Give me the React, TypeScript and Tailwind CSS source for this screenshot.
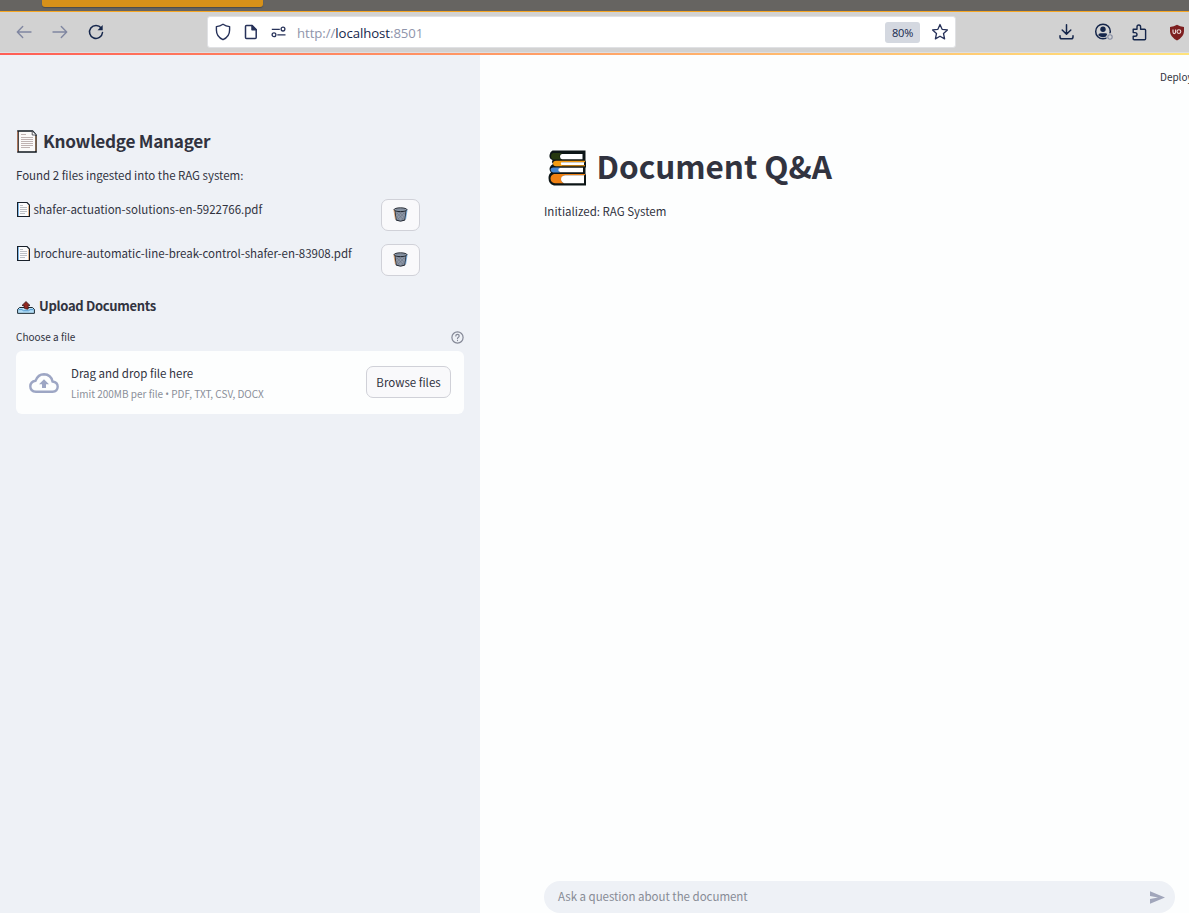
import React from "react";

function DocIcon({ className }: { className: string }) {
  return (
    <svg viewBox="0 0 20 23" className={className}>
      <path d="M1 1H15.5L19 5V22H1Z" fill="#fbfaf9" stroke="#11181f" strokeWidth="1.6" />
      <path d="M.6 1.5V21.5" stroke="#b87a5c" strokeWidth="1" />
      <path d="M18.9 6V21" stroke="#c98d5c" strokeWidth=".8" />
      <path d="M15.2 1.2V5H19" fill="#fff" stroke="#4a4a50" strokeWidth=".9" />
      <path d="M4 4.5H9M4 7.5H16M4 9.5H16M4 11.5H16M4 13.5H16M4 15.5H16M4 17.5H13" stroke="#b8a9a8" strokeWidth=".9" />
    </svg>
  );
}

function SmallDocIcon() {
  return (
    <svg viewBox="0 0 13 15" className="h-[15px] w-[13px] shrink-0">
      <path d="M.5 .5H10L12.5 3V14.5H.5Z" fill="#fcfcfc" stroke="#18202a" strokeWidth="1.2" />
      <path d="M1.5 1V14" stroke="#7db6e6" />
      <path d="M11.5 3.5V14" stroke="#e9bb8d" />
      <path d="M3 3.5H6M3 5.5H10M3 7.5H10M3 9.5H10M3 11.5H8" stroke="#bcbfc4" />
    </svg>
  );
}

function TrashButton() {
  return (
    <div className="flex h-8 w-[39px] items-center justify-center rounded-[7px] border border-[#d0d1d8] bg-[#f9f9fb]">
      <svg viewBox="0 0 15 16" className="mb-px h-[15px] w-[15px]" preserveAspectRatio="none">
        <path d="M1.8 3.5L3.2 14Q7.5 16.2 11.8 14L13.2 3.5Z" fill="#8f98a7" stroke="#1d222b" />
        <path d="M3.5 6L10.8 14M5.8 5L12 11.5M9 5L12.6 8.5M3.5 10L7 14.6M11.5 6L4 14M9 5L3.4 11M6 5L3 8M12 10L8 14.6" stroke="#677182" strokeWidth=".6" />
        <ellipse cx="7.5" cy="2.9" rx="6.5" ry="2" fill="#97a2b1" stroke="#1d222b" />
        <path d="M3 3.1H12" stroke="#687384" strokeWidth=".8" />
        <path d="M.9 3L2.4 13" stroke="#d98842" strokeWidth=".7" />
        <path d="M14.1 3L12.6 13" stroke="#4b94d6" strokeWidth=".7" />
      </svg>
    </div>
  );
}

function BooksIcon() {
  return (
    <svg viewBox="0 0 38 36" className="mt-[5px] h-9 w-[38px] shrink-0">
      <path d="M4.5 .5H37.5V10.5L38 12V17L37.5 18V24L38 25V35.5H6Q.5 34 .5 28Q.5 24 3 22.5Q0 19 3 15.5L5 14Q3 12 4.5 10Q1 9 1.5 5Q2 1.5 4.5 .5Z" fill="#0c1516" />
      <path d="M5 3H15Q11 4 11.5 6.5Q11.5 9 14 9.5H5Q2.7 8.5 3 6Q3.2 3.6 5 3Z" fill="#25380f" />
      <path d="M14 4H34.5V9.2H14Q12 9 12 6.5Q12 4.4 14 4Z" fill="#fff" />
      <path d="M8 10.8H37V12.2H14V15.2H37V16.3H8Q5 16 5 13.5Q5 11 8 10.8Z" fill="#f39c12" />
      <path d="M13.5 12.3H36V15H13.5Q12 13.7 13.5 12.3Z" fill="#fff" />
      <path d="M5 17.5H12Q9.5 20 12 22.5H5Q2.5 22 2.5 19.8Q2.5 18 5 17.5Z" fill="#4687d3" />
      <path d="M12 17.8H35V22.3H12Q8.5 20 12 17.8Z" fill="#fff" />
      <path d="M6 24H37V25.2H17Q13 26 13.2 29.5Q13.2 32 16 33.2H7Q2.5 32.5 2.5 28.5Q2.5 25 6 24Z" fill="#ef8114" />
      <path d="M17 25.3H36V33.2H16Q13 32 13 29Q13 26 17 25.3Z" fill="#fff" />
    </svg>
  );
}

function UploadIcon() {
  return (
    <svg viewBox="0 0 18 14" className="mt-[3px] h-[13px] w-[18px] shrink-0" preserveAspectRatio="none">
      <path d="M2.5 7H15.5L17.4 9V13.3H.6V9Z" fill="#b4def7" stroke="#14212b" />
      <path d="M1.5 9.3H5L6.5 10.5H11.5L13 9.3H16.5" fill="none" stroke="#4b95cc" />
      <path d="M9 .6L13 4.8H11.2V8.7Q8.8 9 7 7.5V4.8H5Z" fill="#922820" stroke="#35191c" strokeWidth=".8" />
    </svg>
  );
}

function BrowserBar() {
  return (
    <div>
      <div className="h-[11px] bg-[#666461] pl-[42px]">
        <div className="h-[7px] w-[221px] rounded-b-[3px] bg-[#d79119] shadow-[0_1px_1px_#4b4b4b]" />
      </div>
      <div className="h-px bg-[#f5a623]" />
      <div className="flex h-[41px] items-center border-b border-[#dedfe2] bg-[#d2d2d2] text-[#15264b]">
        <svg viewBox="0 0 16 14" className="ml-4 h-3.5 w-4" fill="none" stroke="#8087a1" strokeWidth="1.4" strokeLinecap="round" strokeLinejoin="round">
          <path d="M15 7H1.5M6.7 1.5L1.3 7L6.7 12.5" />
        </svg>
        <svg viewBox="0 0 16 14" className="ml-5 h-3.5 w-4" fill="none" stroke="#8087a1" strokeWidth="1.4" strokeLinecap="round" strokeLinejoin="round">
          <path d="M1 7H14.5M9.3 1.5L14.7 7L9.3 12.5" />
        </svg>
        <svg viewBox="0 0 16 16" className="ml-5 h-4 w-4" fill="none" stroke="currentColor" strokeWidth="1.5">
          <path d="M13.2 4A6.5 6.5 0 1 0 14.5 8.5" strokeLinecap="round" />
          <path d="M14.7 1V6.2H9.5Z" fill="currentColor" stroke="none" />
        </svg>
        <div className="ml-[103px] flex h-8 w-[749px] items-center rounded-[3px] border border-[#e0e1e4] bg-white pl-[7px]">
          <svg viewBox="0 0 16 18" className="h-[18px] w-4" fill="none" stroke="#27325a" strokeWidth="1.4" strokeLinejoin="round">
            <path d="M8 1.2Q11 3.3 14.6 3.6V7Q14.6 13.8 8 16.7Q1.4 13.8 1.4 7V3.6Q5 3.3 8 1.2Z" />
          </svg>
          <svg viewBox="0 0 14 16" className="ml-[13px] h-4 w-3.5" fill="none" stroke="#27325a" strokeWidth="1.5" strokeLinejoin="round">
            <path d="M2.5 1.5H8L12.2 5.7V13.5Q12.2 14.5 11.2 14.5H2.5Q1.5 14.5 1.5 13.5V2.5Q1.5 1.5 2.5 1.5Z" />
            <path d="M8 1.5V5.7H12.2Z" fill="#27325a" />
          </svg>
          <svg viewBox="0 0 15 12" className="ml-[13px] h-3 w-[15px]" fill="none" stroke="#27325a" strokeWidth="1.3">
            <path d="M.8 3.3H8.8M6.3 8.8H14.5" />
            <circle cx="12" cy="3.1" r="1.9" />
            <circle cx="3" cy="8.7" r="1.9" />
          </svg>
          <span className="ml-[11px] mt-0.5 w-[587.5px] font-['Open_Sans',sans-serif] text-[13.2px] leading-5 tracking-[-0.06px] text-[#8f95ab]">
            http://<span className="text-[#15264b]">localhost</span>:8501
          </span>
          <span className="flex h-[21px] w-[35px] items-center justify-center rounded-[3px] bg-[#d4d8e0] pt-0.5 pl-px font-['Open_Sans',sans-serif] text-[11px] tracking-[-0.2px]">80%</span>
          <svg viewBox="0 0 18 18" className="ml-[11px] h-[18px] w-[18px] shrink-0" fill="none" stroke="#27325a" strokeWidth="1.3" strokeLinejoin="round">
            <path d="M9 1.5L11.1 6.3L16.4 6.9L12.5 10.5L13.6 15.9L9 13.2L4.4 15.9L5.5 10.5L1.6 6.9L6.9 6.3Z" />
          </svg>
        </div>
        <svg viewBox="0 0 15 16" className="ml-[103px] h-4 w-[15px]" fill="none" stroke="currentColor" strokeWidth="1.5" strokeLinecap="round" strokeLinejoin="round">
          <path d="M7.5 .8V10M3.2 6L7.5 10.3L11.8 6M1 11.8V13Q1 14.8 2.8 14.8H12.2Q14 14.8 14 13V11.8" />
        </svg>
        <svg viewBox="0 0 19 18" className="ml-5 h-[18px] w-[19px]">
          <circle cx="9" cy="8.5" r="7.3" fill="none" stroke="#15264b" strokeWidth="1.5" />
          <circle cx="9" cy="6.2" r="2.7" fill="#15264b" />
          <path d="M4.2 12.2Q4.5 10.2 6.5 10.2H11.5Q13.5 10.2 13.8 12.2Q9 16.5 4.2 12.2Z" fill="#15264b" />
          <circle cx="16" cy="14" r="3.7" fill="#d2d2d2" />
          <circle cx="16" cy="14" r="2.2" fill="none" stroke="#858ca3" strokeWidth="1.1" />
        </svg>
        <svg viewBox="0 0 15 17" className="ml-[19px] h-[17px] w-[15px]" fill="none" stroke="currentColor" strokeWidth="1.4" strokeLinejoin="round">
          <path d="M1.2 5.2H5V3Q5 1 6.8 1Q8.6 1 8.6 3V5.2H12.6Q13.6 5.2 13.6 6.2V14.8Q13.6 15.8 12.6 15.8H2.2Q1.2 15.8 1.2 14.8V12.2H3Q5 12.2 5 10.4Q5 8.6 3 8.6H1.2Z" />
        </svg>
        <svg viewBox="0 0 16 17" className="ml-[22px] h-[17px] w-4">
          <path d="M8 .8Q11 2.8 15 3V7.5Q14.8 13 8 16.4Q1.2 13 1 7.5V3Q5 2.8 8 .8Z" fill="#7d1f20" />
          <path d="M4 5.5V8Q4 9.6 5.3 9.6Q6.6 9.6 6.6 8V5.5" fill="none" stroke="#eadada" strokeWidth="1.1" />
          <circle cx="9.9" cy="7.6" r="1.9" fill="none" stroke="#eadada" strokeWidth="1.1" />
        </svg>
      </div>
      <div className="h-0.5 bg-linear-to-r from-[#ff5e56] to-[#ffe37b]" />
    </div>
  );
}

function Sidebar() {
  return (
    <aside className="flex w-[480px] flex-col bg-[#eef1f6] px-4 pt-[74px]">
      <h2 className="flex h-6 items-center whitespace-nowrap text-[17.2px] font-bold leading-6 tracking-[-0.28px]">
        <DocIcon className="mr-1.5 ml-px h-[23px] w-5" />
        Knowledge Manager
      </h2>
      <p className="mt-3 h-5 whitespace-nowrap text-[11.5px] leading-5 tracking-[-0.02px]">Found 2 files ingested into the RAG system:</p>
      <div className="mt-3.5 flex h-8 justify-between pr-11">
        <div className="flex h-5 items-center gap-[3.5px] whitespace-nowrap pl-px text-[11.5px] leading-5 tracking-[-0.01px]">
          <SmallDocIcon />
          shafer-actuation-solutions-en-5922766.pdf
        </div>
        <TrashButton />
      </div>
      <div className="mt-[13px] flex h-8 justify-between pr-11">
        <div className="-mt-px flex h-5 items-center gap-[3.5px] whitespace-nowrap pl-px text-[11.5px] leading-5 tracking-[-0.02px]">
          <SmallDocIcon />
          brochure-automatic-line-break-control-shafer-en-83908.pdf
        </div>
        <TrashButton />
      </div>
      <h3 className="mt-5 flex h-5 items-center gap-1 pl-px text-[13px] font-bold leading-5 tracking-[-0.31px]">
        <UploadIcon />
        Upload Documents
      </h3>
      <div className="mt-[11px] flex h-5 items-center justify-between text-[10px] leading-5">
        <span>Choose a file</span>
        <svg viewBox="0 0 13 13" className="h-[13px] w-[13px]" fill="none" stroke="#858997" strokeWidth="1.2" strokeLinecap="round">
          <circle cx="6.5" cy="6.5" r="5.6" />
          <path d="M4.8 5Q4.8 3.4 6.5 3.4Q8.2 3.4 8.2 4.9Q8.2 5.8 7.2 6.4Q6.5 6.8 6.5 7.6M6.5 9.4V9.6" />
        </svg>
      </div>
      <div className="mt-1 flex h-[63px] items-center rounded-md bg-[#fdfefe] px-[13px]">
        <svg viewBox="0 0 30 20" className="h-5 w-[30px]">
          <path d="M7 18.8Q1.3 18.5 1.3 13.3Q1.4 8.5 6.6 7.7Q9 1.3 15 1.3Q22 1.5 23.5 8.5Q28.7 9.2 28.7 13.8Q28.5 18.6 23.5 18.8Z" fill="none" stroke="#9da6c4" strokeWidth="2.4" />
          <path d="M15 6.3L20 11.3H17V15H13V11.3H10Z" fill="#9da6c4" />
        </svg>
        <div className="ml-3 flex-1 whitespace-nowrap pt-0.5">
          <div className="h-[21px] text-[11.5px] leading-5">Drag and drop file here</div>
          <div className="h-5 text-[10px] leading-5 text-[#8a8f99]">
            Limit 200MB per file <span className="font-['Open_Sans',sans-serif] text-[10px]">•</span> PDF, TXT, CSV, DOCX
          </div>
        </div>
        <button className="mb-px h-8 w-[85px] whitespace-nowrap rounded-[7px] border border-[#d0d1d8] bg-[#f9f9fb] pt-px text-[11.5px]">Browse files</button>
      </div>
    </aside>
  );
}

export default function App() {
  return (
    <div className="flex h-[913px] w-[1189px] flex-col overflow-hidden bg-[#fdfefe] font-['Noto_Sans_CJK_SC',sans-serif] text-[#31333f]">
      <BrowserBar />
      <div className="flex min-h-0 flex-1">
        <Sidebar />
        <main className="flex min-w-0 flex-1 flex-col">
          <div className="h-11 overflow-hidden whitespace-nowrap pt-3 pl-[680px] text-[10px] leading-5">Deploy</div>
          <h1 className="mt-[46px] ml-[67.5px] flex h-10 items-center gap-[11px] whitespace-nowrap text-[31.5px] font-bold leading-10 tracking-[-0.04px]">
            <BooksIcon />
            Document Q&amp;A
          </h1>
          <p className="mt-4 ml-16 h-5 text-[11.5px] leading-5">Initialized: RAG System</p>
          <div className="mt-auto mr-3.5 ml-16 flex h-8 items-center justify-between rounded-full bg-[#eef1f6] pr-2.5 pl-3.5 text-[11.5px] tracking-[-0.02px] text-[#878b95]">
            <span>Ask a question about the document</span>
            <svg viewBox="0 0 15 13" className="h-[13px] w-[15px]">
              <path d="M0 .3L15 6.5L0 12.7V8L8 6.5L0 5Z" fill="#a1a6bb" />
            </svg>
          </div>
        </main>
      </div>
    </div>
  );
}
